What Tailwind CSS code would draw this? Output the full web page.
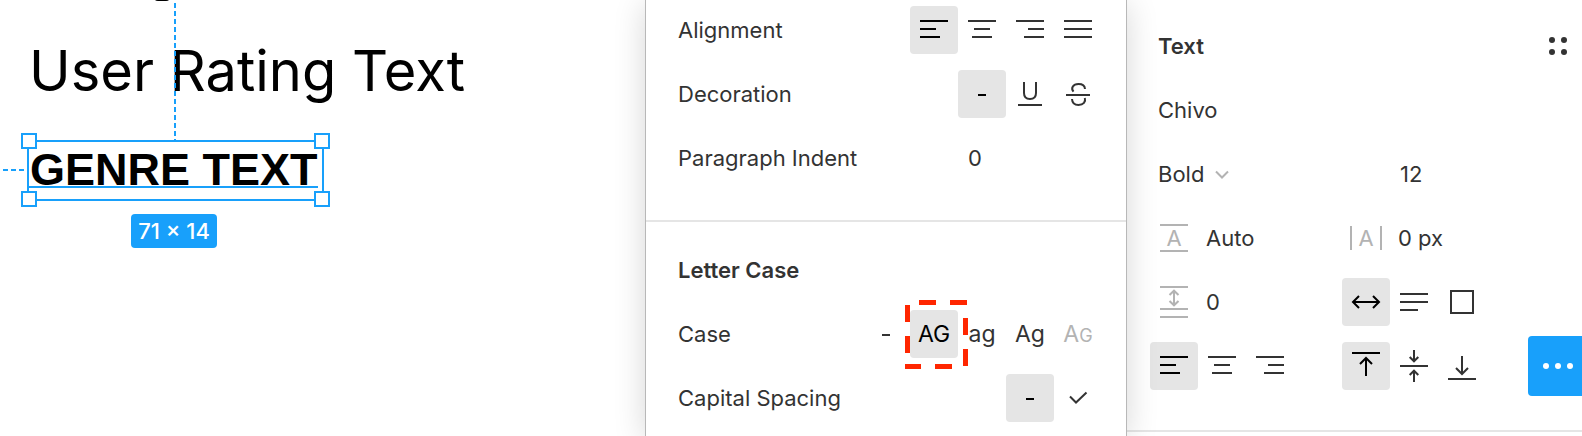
<!DOCTYPE html>
<html lang="en">
<head>
<meta charset="utf-8">
<title>Text properties</title>
<script src="https://cdn.jsdelivr.net/npm/@tailwindcss/browser@4"></script>
</head>
<body class="flex min-h-screen overflow-hidden bg-white font-[Inter,sans-serif] text-[22px] leading-7 text-[#333333]">

<!-- Shared icons, all on a 48px cell -->
<svg class="hidden">
  <defs>
    <g id="left"><path d="M10 15H38M10 23H26M10 31H30"/></g>
    <g id="center"><path d="M10 15H38M16 23H32M14 31H34"/></g>
    <g id="right"><path d="M10 15H38M22 23H38M18 31H38"/></g>
    <g id="none"><path d="M20 25H28"/></g>
  </defs>
</svg>

<!-- Canvas -->
<main class="relative min-w-0 flex-1 overflow-hidden bg-white text-black">
  <div class="absolute top-[-7px] left-[154px] h-2 w-4 rounded-full bg-black"></div>
  <p class="absolute top-[35px] left-[29px] text-[56px] leading-[72px] whitespace-nowrap">User Rating Text</p>
  <p class="absolute top-[144px] left-[30px] font-['Liberation_Sans',sans-serif] text-[45px] leading-[52px] font-bold whitespace-nowrap">GENRE TEXT</p>
  <svg class="absolute top-0 left-0 h-[210px] w-[340px]" fill="none" stroke="#18a0fb" stroke-width="2">
    <path d="M175 3V140M3 170H28" stroke-dasharray="5 3"/>
    <path d="M28 187H318"/>
    <rect x="28" y="141" width="295" height="59"/>
    <g fill="#fff">
      <rect x="22" y="134" width="14" height="14"/>
      <rect x="315" y="134" width="14" height="14"/>
      <rect x="22" y="192" width="14" height="14"/>
      <rect x="315" y="192" width="14" height="14"/>
    </g>
  </svg>
  <div class="absolute top-[214px] left-[131px] flex h-[34px] w-[86px] items-center justify-center rounded bg-[#18a0fb] font-medium whitespace-nowrap text-white">71 × 14</div>
</main>

<!-- Type details -->
<section class="relative z-10 w-[482px] shrink-0 border-x border-[#b8b8b8] bg-white shadow-[0_4px_30px_rgba(0,0,0,0.16)]">
  <div class="flex flex-col gap-4 border-b-2 border-[#e5e5e5] pt-1.5 pr-6 pb-[38px] pl-8">
    <div class="flex h-12 items-center justify-between">
      <span>Alignment</span>
      <div class="flex">
        <button aria-label="Align left" class="size-12 rounded bg-[#e5e5e5] text-black"><svg class="size-12" fill="none" stroke="currentColor" stroke-width="2"><use href="#left"/></svg></button>
        <button aria-label="Align center" class="size-12"><svg class="size-12" fill="none" stroke="currentColor" stroke-width="2"><use href="#center"/></svg></button>
        <button aria-label="Align right" class="size-12"><svg class="size-12" fill="none" stroke="currentColor" stroke-width="2"><use href="#right"/></svg></button>
        <button aria-label="Justify" class="size-12"><svg class="size-12" fill="none" stroke="currentColor" stroke-width="2"><path d="M10 15H38M10 23H38M10 31H38"/></svg></button>
      </div>
    </div>
    <div class="flex h-12 items-center justify-between">
      <span>Decoration</span>
      <div class="flex">
        <button aria-label="No decoration" class="size-12 rounded bg-[#e5e5e5] text-black"><svg class="size-12" fill="none" stroke="currentColor" stroke-width="2"><use href="#none"/></svg></button>
        <button aria-label="Underline" class="size-12"><svg class="size-12" fill="none" stroke="currentColor" stroke-width="2"><path d="M18 12V23C18 27 20.500 29 24 29S30 27 30 23V12M12 35H36"/></svg></button>
        <button aria-label="Strikethrough" class="size-12"><svg class="size-12" fill="none" stroke="currentColor" stroke-width="2"><path d="M12 25H36M19.500 21.700C16.500 18 19 14 24.500 14C28.500 14 30.800 16 31 19M18 29C18.200 33 21 35 24.500 35C29.500 35 32 31.800 30.800 28"/></svg></button>
      </div>
    </div>
    <div class="flex h-12 items-center justify-between">
      <label for="indent">Paragraph Indent</label>
      <input id="indent" value="0" class="w-[134px] bg-transparent outline-none">
    </div>
  </div>
  <div class="flex flex-col gap-4 pt-6 pr-6 pl-8">
    <h2 class="flex h-12 items-center font-semibold">Letter Case</h2>
    <div class="flex h-12 items-center justify-between">
      <span>Case</span>
      <div class="flex">
        <button aria-label="As typed" class="size-12"><svg class="size-12" fill="none" stroke="currentColor" stroke-width="2"><use href="#none"/></svg></button>
        <div class="relative">
          <button class="size-12 rounded bg-[#e5e5e5] text-[23px] text-black">AG</button>
          <svg class="pointer-events-none absolute -top-2.5 -left-[5px] z-10 h-[69px] w-[63px]" fill="#ff2600">
            <path d="M14 0h17v5h-17zM45 0h17v5h-17zM0 5h5v17h-5zM0 36h5v17h-5zM58 18h5v17h-5zM58 49h5v17h-5zM0 64h16v5h-16zM30 64h17v5h-17z"/>
          </svg>
        </div>
        <button class="size-12 text-[23px]">ag</button>
        <button class="size-12 text-[23px]">Ag</button>
        <button class="size-12 text-[23px] text-[#b3b3b3]">A<span class="text-lg leading-none">G</span></button>
      </div>
    </div>
    <div class="flex h-12 items-center justify-between">
      <span>Capital Spacing</span>
      <div class="flex">
        <button aria-label="Default spacing" class="size-12 rounded bg-[#e5e5e5] text-black"><svg class="size-12" fill="none" stroke="currentColor" stroke-width="2"><use href="#none"/></svg></button>
        <button aria-label="Capital spacing" class="size-12"><svg class="size-12" fill="none" stroke="currentColor" stroke-width="2"><path d="M16 22.500L22 28.500L32.500 18.500"/></svg></button>
      </div>
    </div>
  </div>
</section>

<!-- Text panel -->
<aside class="w-[455px] shrink-0 bg-white">
  <div class="flex flex-col gap-4 border-b-2 border-[#e5e5e5] pt-[22px] pb-10 pl-[23px]">
    <div class="flex h-12 items-center justify-between pl-2">
      <h2 class="font-semibold">Text</h2>
      <button aria-label="Styles" class="size-12"><svg class="size-12" fill="currentColor"><circle cx="18" cy="18" r="3"/><circle cx="30" cy="18" r="3"/><circle cx="18" cy="30" r="3"/><circle cx="30" cy="30" r="3"/></svg></button>
    </div>
    <div class="flex h-12 items-center pl-2">
      <input aria-label="Font family" value="Chivo" class="w-full bg-transparent outline-none">
    </div>
    <div class="grid h-12 grid-cols-[192px_1fr] items-center">
      <div class="relative flex items-center pl-2">
        <select aria-label="Font weight" class="w-20 appearance-none bg-transparent outline-none"><option>Bold</option></select>
        <svg class="pointer-events-none absolute left-16 h-4 w-4" fill="none" stroke="#b3b3b3" stroke-width="2"><path d="M2 5.500L8 11.500L14 5.500"/></svg>
      </div>
      <input aria-label="Font size" value="12" class="ml-14 w-24 bg-transparent pl-0.5 outline-none">
    </div>
    <div class="grid h-12 grid-cols-[192px_1fr] items-center">
      <label class="flex items-center gap-2">
        <svg role="img" aria-label="Line height" class="size-12 shrink-0" fill="none" stroke="#b3b3b3" stroke-width="2"><path d="M10 11H38M10 37H38"/><text x="24" y="32" text-anchor="middle" fill="#b3b3b3" stroke="none">A</text></svg>
        <input value="Auto" class="w-24 bg-transparent outline-none">
      </label>
      <label class="flex items-center gap-2">
        <svg role="img" aria-label="Letter spacing" class="size-12 shrink-0" fill="none" stroke="#b3b3b3" stroke-width="2"><path d="M9 12V36M39 12V36"/><text x="24" y="32" text-anchor="middle" fill="#b3b3b3" stroke="none">A</text></svg>
        <input value="0 px" class="w-24 bg-transparent outline-none">
      </label>
    </div>
    <div class="grid h-12 grid-cols-[192px_1fr] items-center">
      <label class="flex items-center gap-2">
        <svg role="img" aria-label="Paragraph spacing" class="size-12 shrink-0" fill="none" stroke="#b3b3b3" stroke-width="2"><path d="M10 9H38M10 31H38M10 39H38M24 13V27M19.500 17L24 12.700L28.500 17M19.500 23L24 27.300L28.500 23"/></svg>
        <input value="0" class="w-24 bg-transparent outline-none">
      </label>
      <div class="flex">
        <button aria-label="Auto width" class="size-12 rounded bg-[#e5e5e5] text-black"><svg class="size-12" fill="none" stroke="currentColor" stroke-width="2"><path d="M11 24H37M17 18L11 24L17 30M31 18L37 24L31 30"/></svg></button>
        <button aria-label="Auto height" class="size-12"><svg class="size-12" fill="none" stroke="currentColor" stroke-width="2"><path d="M10 16H38M10 24H38M10 32H28"/></svg></button>
        <button aria-label="Fixed size" class="size-12"><svg class="size-12" fill="none" stroke="currentColor" stroke-width="2"><path d="M13 13H35V35H13Z"/></svg></button>
      </div>
    </div>
    <div class="grid h-12 grid-cols-[192px_1fr_auto] items-center">
      <div class="flex">
        <button aria-label="Align left" class="size-12 rounded bg-[#e5e5e5] text-black"><svg class="size-12" fill="none" stroke="currentColor" stroke-width="2"><use href="#left"/></svg></button>
        <button aria-label="Align center" class="size-12"><svg class="size-12" fill="none" stroke="currentColor" stroke-width="2"><use href="#center"/></svg></button>
        <button aria-label="Align right" class="size-12"><svg class="size-12" fill="none" stroke="currentColor" stroke-width="2"><use href="#right"/></svg></button>
      </div>
      <div class="flex">
        <button aria-label="Align top" class="size-12 rounded bg-[#e5e5e5] text-black"><svg class="size-12" fill="none" stroke="currentColor" stroke-width="2"><path d="M10 11H38M24 34V16M18 22L24 16L30 22"/></svg></button>
        <button aria-label="Align middle" class="size-12"><svg class="size-12" fill="none" stroke="currentColor" stroke-width="2"><path d="M10 24H38M24 8V19M19.700 15L24 19.300L28.300 15M24 40V29M19.700 33L24 28.700L28.300 33"/></svg></button>
        <button aria-label="Align bottom" class="size-12"><svg class="size-12" fill="none" stroke="currentColor" stroke-width="2"><path d="M10 37H38M24 14V32M18 26L24 32L30 26"/></svg></button>
      </div>
      <button aria-label="Type settings" class="-my-1.5 h-[60px] w-[54px] rounded-l bg-[#18a0fb]"><svg class="h-[60px] w-[54px]" fill="#fff"><circle cx="18" cy="30" r="3"/><circle cx="30" cy="30" r="3"/><circle cx="42" cy="30" r="3"/></svg></button>
    </div>
  </div>
</aside>
</body>
</html>
